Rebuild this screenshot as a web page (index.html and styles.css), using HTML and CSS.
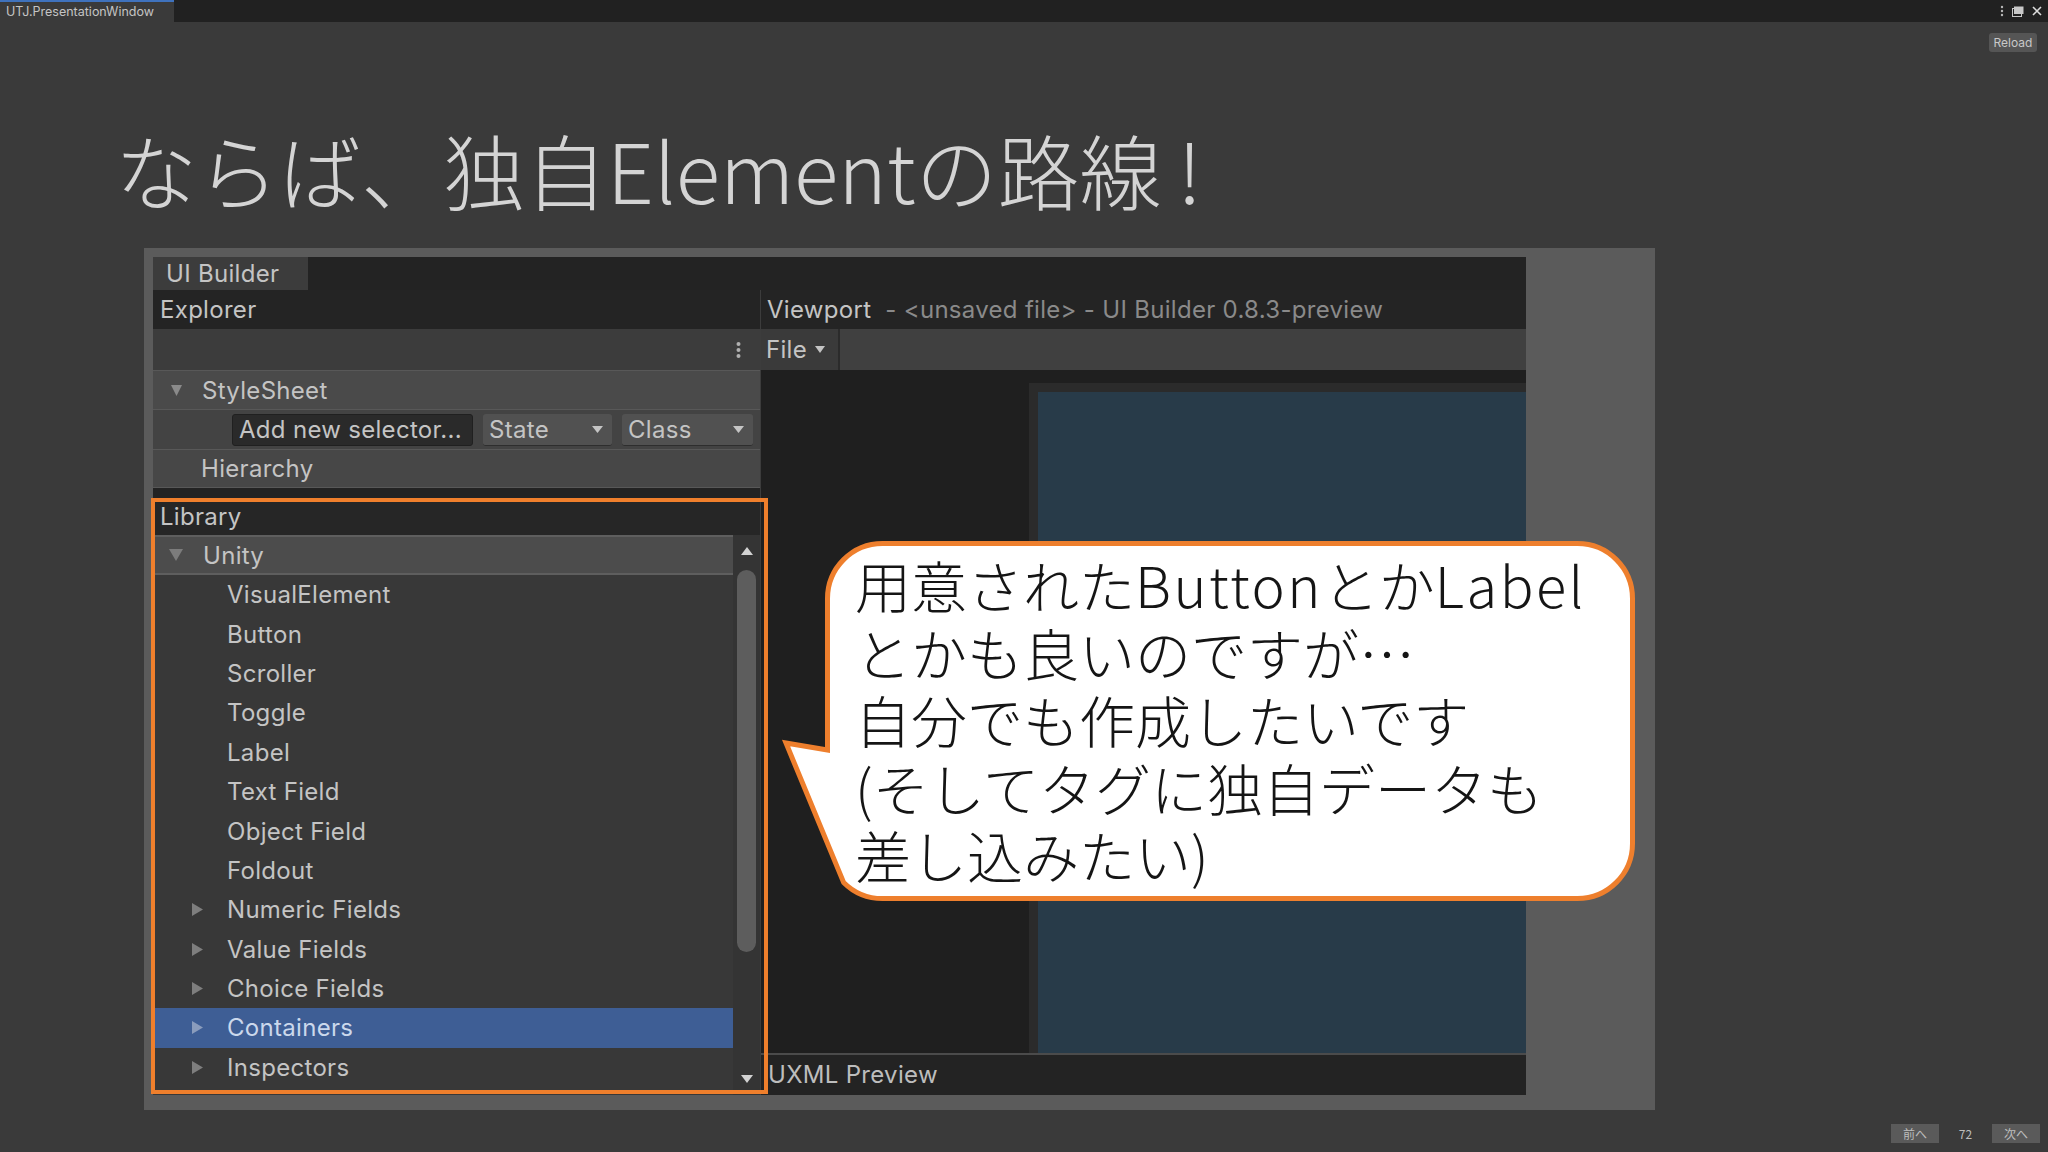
FILE: index.html
```html
<!DOCTYPE html>
<html lang="ja">
  <head>
    <meta charset="utf-8">
    <title>UTJ.PresentationWindow</title>
    <link rel="stylesheet" href="styles.css">
  </head>
  <body>
    <div class="topbar">
      <div class="topbar-tab">UTJ.PresentationWindow</div>
      <div class="topbar-icons">
        <svg width="4" height="12" viewBox="0 0 4 12"><circle cx="2" cy="2" r="1.2" fill="#b8b8b8"/><circle cx="2" cy="6" r="1.2" fill="#b8b8b8"/><circle cx="2" cy="10" r="1.2" fill="#b8b8b8"/></svg>
        <svg width="12" height="11" viewBox="0 0 12 11"><rect x="0.5" y="2.5" width="9" height="8" fill="none" stroke="#c8c8c8"/><rect x="2" y="0.5" width="9.5" height="7.5" fill="#c8c8c8"/></svg>
        <svg width="10" height="10" viewBox="0 0 10 10"><path d="M1 1L9 9M9 1L1 9" stroke="#dcdcdc" stroke-width="1.6"/></svg>
      </div>
    </div>
    <div class="subbar">
      <div class="reload">Reload</div>
    </div>

    <h1 class="slide-title">ならば、独自Elementの路線<span class="bang">!</span></h1>

    <div class="shot">
      <div class="builder">
        <div class="builder-tabs">
          <div class="builder-tab">UI Builder</div>
        </div>
        <div class="builder-body">
          <!-- explorer / library column -->
          <div class="explorer">
            <div class="panel-head">Explorer</div>
            <div class="toolbar explorer-tools">
              <svg width="5" height="18" viewBox="0 0 5 18"><circle cx="2.5" cy="3" r="2" fill="#b0b0b0"/><circle cx="2.5" cy="9" r="2" fill="#b0b0b0"/><circle cx="2.5" cy="15" r="2" fill="#b0b0b0"/></svg>
            </div>
            <div class="tree-row stylesheet-row">
              <svg class="twisty-down" width="11" height="11" viewBox="0 0 11 11"><path d="M0 0H11L5.5 11Z" fill="#8a8a8a"/></svg>
              StyleSheet
            </div>
            <div class="tree-row selector-row">
              <div class="field text-field">Add new selector...</div>
              <div class="field dropdown state-dd">State
                <svg width="11" height="7" viewBox="0 0 11 7"><path d="M0 0H11L5.5 7Z" fill="#c4c4c4"/></svg>
              </div>
              <div class="field dropdown class-dd">Class
                <svg width="11" height="7" viewBox="0 0 11 7"><path d="M0 0H11L5.5 7Z" fill="#c4c4c4"/></svg>
              </div>
            </div>
            <div class="tree-row hierarchy-row">Hierarchy</div>
            <div class="panel-gap"></div>

            <div class="library">
              <div class="library-head">Library</div>
              <div class="library-list">
                <div class="items">
                  <div class="unity-row">
                    <svg class="twisty-down" width="14" height="12" viewBox="0 0 14 12"><path d="M0 0H14L7 12Z" fill="#7c7c7c"/></svg>
                    Unity
                  </div>
                  <div class="item">VisualElement</div>
                  <div class="item">Button</div>
                  <div class="item">Scroller</div>
                  <div class="item">Toggle</div>
                  <div class="item">Label</div>
                  <div class="item">Text Field</div>
                  <div class="item">Object Field</div>
                  <div class="item">Foldout</div>
                  <div class="item"><span class="twisty"><svg width="11" height="13" viewBox="0 0 11 13"><path d="M0 0L11 6.5L0 13Z" fill="#7e7e7e"/></svg></span>Numeric Fields</div>
                  <div class="item"><span class="twisty"><svg width="11" height="13" viewBox="0 0 11 13"><path d="M0 0L11 6.5L0 13Z" fill="#7e7e7e"/></svg></span>Value Fields</div>
                  <div class="item"><span class="twisty"><svg width="11" height="13" viewBox="0 0 11 13"><path d="M0 0L11 6.5L0 13Z" fill="#7e7e7e"/></svg></span>Choice Fields</div>
                  <div class="item selected"><span class="twisty"><svg width="11" height="13" viewBox="0 0 11 13"><path d="M0 0L11 6.5L0 13Z" fill="#8a9cbc"/></svg></span>Containers</div>
                  <div class="item"><span class="twisty"><svg width="11" height="13" viewBox="0 0 11 13"><path d="M0 0L11 6.5L0 13Z" fill="#7e7e7e"/></svg></span>Inspectors</div>
                </div>
                <div class="scrollbar">
                  <svg width="12" height="8" viewBox="0 0 12 8"><path d="M6 0L12 8H0Z" fill="#d2d2d2"/></svg>
                  <div class="scroll-thumb"></div>
                  <svg class="scroll-down" width="12" height="8" viewBox="0 0 12 8"><path d="M0 0H12L6 8Z" fill="#d2d2d2"/></svg>
                </div>
              </div>
            </div>
          </div>

          <!-- viewport column -->
          <div class="viewport">
            <div class="panel-head">Viewport<span class="panel-sub">- &lt;unsaved file&gt; - UI Builder 0.8.3-preview</span></div>
            <div class="toolbar">
              <div class="file-btn">File
                <svg width="10" height="7" viewBox="0 0 10 7"><path d="M0 0H10L5 7Z" fill="#c4c4c4"/></svg>
              </div>
            </div>
            <div class="canvas">
              <div class="doc">
                <div class="doc-fill"></div>
              </div>
            </div>
            <div class="preview">UXML Preview</div>
          </div>
        </div>
      </div>
    </div>

    <div class="pager">
      <div class="pager-btn">前へ</div>
      <div class="pager-num">72</div>
      <div class="pager-btn">次へ</div>
    </div>

    <div class="bubble">
      <svg class="bubble-shape" width="860" height="372" viewBox="0 0 860 372">
        <path d="M102.5 7.5H797.5A55 55 0 0 1 852.5 62.5V307.5A55 55 0 0 1 797.5 362.5H102.5A55 55 0 0 1 63.6 346.4L6 207L47.5 214V62.5A55 55 0 0 1 102.5 7.5Z" fill="#fff" stroke="#ee7f2d" stroke-width="5"/>
      </svg>
      <div class="bubble-text">
        <div class="bubble-line">用意された<span class="latin">Button</span>とか<span class="latin">Label</span></div>
        <div class="bubble-line">とかも良いのですが…</div>
        <div class="bubble-line">自分でも作成したいです</div>
        <div class="bubble-line">(そしてタグに独自データも</div>
        <div class="bubble-line">差し込みたい)</div>
      </div>
    </div>
  </body>
</html>
```

FILE: styles.css
```css
* {
  box-sizing: border-box;
}
body {
  margin: 0;
  width: 2048px;
  height: 1152px;
  overflow: hidden;
  position: relative;
  background: #3a3a3a;
  font-family: Inter, "Noto Sans", sans-serif;
}

/* window chrome */
.topbar {
  height: 22px;
  background: #212121;
  display: flex;
  justify-content: space-between;
}
.topbar-tab {
  width: 174px;
  background: #3a3a3a;
  border-top: 2px solid #3f72bd;
  color: #c4c4c4;
  font-size: 12.5px;
  line-height: 19px;
  padding-left: 6px;
}
.topbar-icons {
  display: flex;
  align-items: center;
  gap: 8px;
  padding-right: 6px;
}
.subbar {
  height: 38px;
  display: flex;
  justify-content: flex-end;
  padding: 11px 11px 0 0;
}
.reload {
  width: 48px;
  height: 19px;
  background: #555;
  border-radius: 3px;
  color: #c8c8c8;
  font-size: 12px;
  line-height: 19px;
  text-align: center;
}

.slide-title {
  margin: 59px 0 29px;
  padding-left: 115px;
  font-family: "Noto Sans CJK JP", sans-serif;
  font-weight: 300;
  font-size: 82px;
  line-height: 100px;
  color: #d4d4d4;
  white-space: nowrap;
}
.bang {
  margin-left: 16px;
}

/* screenshot of the ui builder */
.shot {
  margin-left: 144px;
  width: 1511px;
  height: 862px;
  background: #5b5b5b;
  padding: 9px 129px 15px 9px;
}
.builder {
  height: 100%;
  background: #232323;
  display: flex;
  flex-direction: column;
  color: #c4c4c4;
  font-size: 24px;
  letter-spacing: 0.3px;
}
.builder-tabs {
  height: 33px;
  display: flex;
}
.builder-tab {
  width: 155px;
  background: #3c3c3c;
  padding-left: 13px;
  line-height: 33px;
}
.builder-body {
  flex: 1;
  display: flex;
  min-height: 0;
}
.explorer {
  width: 607px;
  display: flex;
  flex-direction: column;
}
.panel-head {
  height: 39px;
  line-height: 39px;
  padding-left: 7px;
  background: #242424;
  white-space: nowrap;
}
.panel-sub {
  color: #8a8a8a;
  margin-left: 14px;
}
.toolbar {
  height: 41px;
  background: #3c3c3c;
  display: flex;
  align-items: center;
}
.explorer-tools {
  justify-content: flex-end;
  padding-right: 19px;
}
.tree-row {
  height: 39px;
  display: flex;
  align-items: center;
  border-top: 1px solid #585858;
}
.stylesheet-row {
  background: #4a4a4a;
  padding-left: 18px;
  gap: 20px;
}
.selector-row {
  height: 40px;
  background: #434343;
  padding-left: 79px;
  gap: 10px;
}
.hierarchy-row {
  background: #474747;
  padding-left: 48px;
  border-bottom: 1px solid #585858;
}
.field {
  height: 32px;
  border-radius: 3px;
  display: flex;
  align-items: center;
  padding: 0 6px;
  white-space: nowrap;
}
.text-field {
  width: 241px;
  background: #2a2a2a;
  border: 1px solid #202020;
}
.dropdown {
  background: #515151;
  border-bottom: 1px solid #2e2e2e;
  justify-content: space-between;
  padding-right: 9px;
}
.state-dd {
  width: 129px;
}
.class-dd {
  width: 131px;
}
.panel-gap {
  height: 10px;
}

.library {
  flex: 1;
  display: flex;
  flex-direction: column;
  position: relative;
  background: #383838;
  min-height: 0;
}
/* the orange annotation frame drawn over the library */
.library::after {
  content: "";
  position: absolute;
  top: 0;
  left: -2px;
  right: -8px;
  bottom: 1px;
  border: 4px solid #ef7f2c;
}
.library-head {
  height: 37px;
  line-height: 37px;
  padding-left: 7px;
  background: #262626;
}
.library-list {
  flex: 1;
  display: flex;
  min-height: 0;
}
.items {
  flex: 1;
}
.unity-row {
  height: 40px;
  background: #4c4c4c;
  border-top: 2px solid #5e5e5e;
  border-bottom: 2px solid #5e5e5e;
  display: flex;
  align-items: center;
  padding-left: 16px;
  gap: 20px;
}
.item {
  height: 39.4px;
  display: flex;
  align-items: center;
  padding-left: 74px;
}
.twisty {
  width: 35px;
  margin-left: -35px;
  display: flex;
}
.item.selected {
  background: #3e5e95;
  color: #cbd8ec;
}
.scrollbar {
  width: 27px;
  background: #343434;
  display: flex;
  flex-direction: column;
  align-items: center;
  padding: 12px 0 12px;
}
.scroll-thumb {
  width: 19px;
  height: 382px;
  margin-top: 15px;
  border-radius: 10px;
  background: #5d5d5d;
}
.scroll-down {
  margin-top: auto;
}

.viewport {
  flex: 1;
  display: flex;
  flex-direction: column;
  border-left: 1px solid #3c3c3c;
}
.viewport .panel-head {
  padding-left: 6px;
}
.viewport .toolbar {
  background: #404040;
}
.file-btn {
  width: 79px;
  height: 100%;
  display: flex;
  align-items: center;
  gap: 8px;
  padding-left: 5px;
  background: #3a3a3a;
  border-right: 2px solid #2b2b2b;
}
.canvas {
  flex: 1;
  background: #1f1f1f;
  padding: 13px 0 0 268px;
  display: flex;
}
.doc {
  flex: 1;
  background: #2b2b2b;
  padding: 9px 0 0 9px;
  display: flex;
}
.doc-fill {
  flex: 1;
  background: #283b49;
}
.preview {
  height: 42px;
  border-top: 2px solid #4b4b4b;
  background: #232323;
  padding-left: 7px;
  line-height: 40px;
  color: #bdbdbd;
}

/* slide pager */
.pager {
  margin-top: 14px;
  height: 19px;
  display: flex;
  justify-content: flex-end;
  align-items: center;
  padding-right: 8px;
  font-family: "Noto Sans CJK JP", sans-serif;
  font-size: 12px;
  color: #bdbdbd;
}
.pager-btn {
  width: 48px;
  height: 19px;
  background: #5a5a5a;
  text-align: center;
  line-height: 19px;
}
.pager-num {
  width: 53px;
  text-align: center;
}

/* speech bubble over the screenshot */
.bubble {
  position: absolute;
  left: 780px;
  top: 536px;
  width: 860px;
  height: 372px;
}
.bubble-shape {
  display: block;
}
.bubble-text {
  position: absolute;
  left: 75px;
  top: 14px;
  font-family: "Noto Sans CJK JP", sans-serif;
  font-weight: 300;
  font-size: 56px;
  color: #151515;
  white-space: nowrap;
}
.bubble-line {
  height: 67.5px;
  line-height: 67.5px;
}
.latin {
  letter-spacing: 2.5px;
}
```
